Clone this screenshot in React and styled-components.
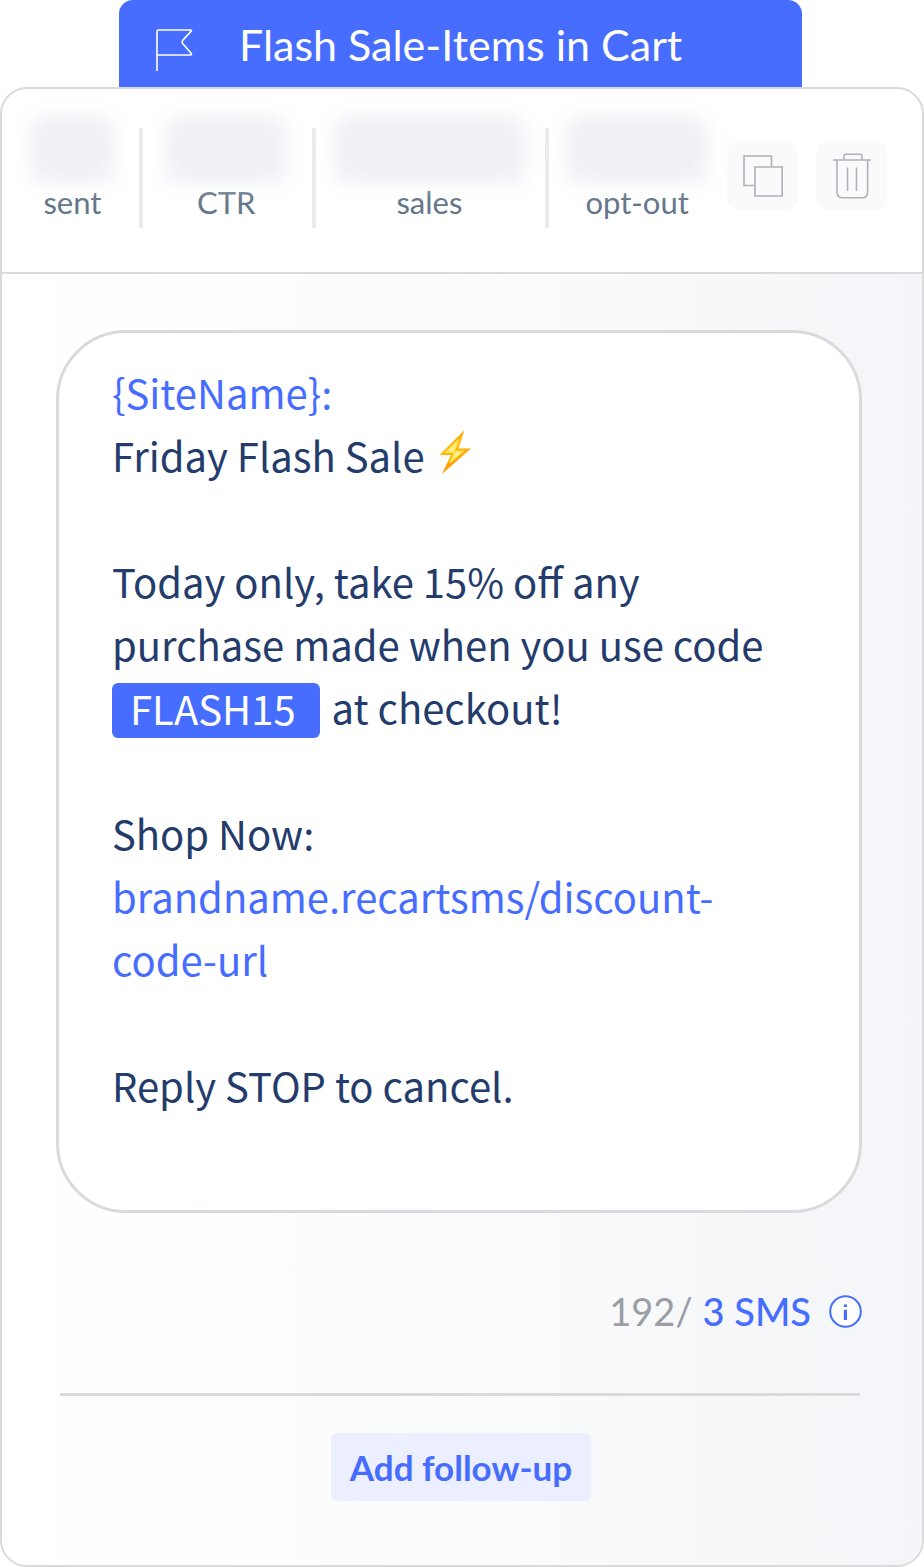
import styled, { createGlobalStyle } from "styled-components";

const GlobalStyle = createGlobalStyle`
  * {
    box-sizing: border-box;
  }

  body {
    margin: 0;
    background: #fff;
    font-family: Lato, "Open Sans", sans-serif;
  }
`;

const Page = styled.main`
  min-width: 720px;
`;

const Tab = styled.header`
  display: flex;
  align-items: flex-end;
  gap: 45px;
  height: 87px;
  margin: 0 122px 0 119px;
  padding: 0 34px 15px;
  background: #476dff;
  color: #fff;
  border-radius: 14px 14px 0 0;
`;

const Title = styled.h1`
  margin: 0;
  font-size: 43px;
  line-height: 54px;
  font-weight: 400;
  white-space: nowrap;
`;

const Card = styled.section`
  border: 2px solid #d9dadb;
  border-radius: 27px;
  overflow: hidden;
`;

const CardHeader = styled.div`
  display: flex;
  align-items: flex-start;
  padding: 28px 35px 44px 0;
  border-bottom: 2px solid #d9dadb;
`;

const Stat = styled.div`
  display: flex;
  flex-direction: column;
  align-items: center;
  flex: ${({ $grow }) => $grow} 1 0;
  padding-right: 2px;

  &:first-child {
    padding: 0 0 0 4px;
  }
`;

const HiddenValue = styled.div`
  width: ${({ $width }) => $width};
  height: 66px;
  background: #eff0f5;
  border-radius: 12px;
  filter: blur(10px);
`;

const StatLabel = styled.span`
  font-size: 31px;
  line-height: 38px;
  color: #64768a;
`;

const Divider = styled.div`
  width: 4px;
  height: 100px;
  margin-top: 11px;
  background: #ebebeb;
`;

const Actions = styled.div`
  display: flex;
  gap: 18px;
  margin-top: 24px;
`;

const IconButton = styled.button`
  display: flex;
  align-items: center;
  justify-content: center;
  width: 71px;
  height: 69px;
  padding: 0;
  border: none;
  border-radius: 12px;
  background: #f9fafc;
  color: #aeb1b8;
  cursor: pointer;
`;

const CardBody = styled.div`
  padding: 56px 60px 64px 54px;
  background: linear-gradient(90deg, #fff 0%, #fafbfc 55%, #f4f5f8 100%);
`;

const Message = styled.div`
  padding: 28px 53px 93px;
  border: 3px solid #d9dadb;
  border-radius: 70px;
  background: #fff;
  color: #243c6c;
  font-family: "Noto Sans CJK SC", "Open Sans", sans-serif;
  font-size: 40px;
  line-height: 63px;
`;

const Paragraph = styled.p`
  margin: 0 0 63px;

  &:last-child {
    margin-bottom: 0;
  }
`;

const Variable = styled.span`
  color: #476dff;
`;

const ShopLink = styled.a`
  color: #476dff;
  text-decoration: none;
`;

const Code = styled.span`
  display: inline-block;
  height: 55px;
  margin: 7px 3px 0 0;
  padding: 0 24px 0 18px;
  border-radius: 6px;
  background: #476dff;
  color: #fff;
  line-height: 50px;
  vertical-align: top;
`;

const Bolt = styled.svg`
  margin-left: 4px;
  vertical-align: -3px;
`;

const Counter = styled.div`
  display: flex;
  align-items: center;
  justify-content: flex-end;
  margin-top: 74px;
  font-size: 38px;
  line-height: 48px;
`;

const Characters = styled.span`
  color: #9c9ea6;
`;

const Segments = styled.span`
  margin: 0 18px 0 10px;
  color: #476dff;
  font-weight: 500;
`;

const InfoButton = styled.button`
  display: flex;
  padding: 0;
  border: none;
  background: none;
  color: #476dff;
  cursor: pointer;
`;

const Separator = styled.hr`
  height: 3px;
  margin: 58px 2px 37px 4px;
  border: none;
  background: #d9dadb;
`;

const Footer = styled.div`
  display: flex;
  justify-content: center;
  padding-left: 4px;
`;

const FollowUpButton = styled.button`
  height: 68px;
  padding: 0 19px;
  border: none;
  border-radius: 6px;
  background: #ecefff;
  color: #476dff;
  font-family: inherit;
  font-size: 35px;
  font-weight: 700;
  cursor: pointer;
`;

const stats = [
  { label: "sent", grow: 133, width: "62%" },
  { label: "CTR", grow: 167, width: "72%" },
  { label: "sales", grow: 228, width: "83%" },
  { label: "opt-out", grow: 176, width: "80%" },
];

function FlagIcon() {
  return (
    <svg width="41" height="44" viewBox="0 0 41 44" fill="none" stroke="currentColor" strokeWidth="1.6" aria-hidden="true">
      <path d="M4 43V3.5Q4 2 5.5 2H37.4Q39.2 2 38 3.4L29.6 12.5Q28.6 14 29.6 15.5L38 25Q39.2 27 37.4 27H4" />
    </svg>
  );
}

function CopyIcon() {
  return (
    <svg width="40" height="42" viewBox="0 0 40 42" fill="none" stroke="currentColor" strokeWidth="1.6" aria-hidden="true">
      <path d="M11.5 30.5H1V1H28.5V12" />
      <path d="M12 12H39.2V41H12Z" />
    </svg>
  );
}

function TrashIcon() {
  return (
    <svg width="38" height="46" viewBox="0 0 38 46" fill="none" stroke="currentColor" strokeWidth="1.6" aria-hidden="true">
      <path d="M0 7H38M11 7V3Q11 1.2 12.8 1.2H27.2Q29 1.2 29 3V7" />
      <path d="M4 7V39Q4 44.8 9.8 44.8H28.8Q34.6 44.8 34.6 39V7M14.5 14.5V38M23.5 14.5V38" />
    </svg>
  );
}

function InfoIcon() {
  return (
    <svg width="33" height="33" viewBox="0 0 33 33" aria-hidden="true">
      <circle cx="16.5" cy="16.5" r="15.3" fill="#fff" stroke="currentColor" strokeWidth="2" />
      <path d="M14.8 9.5H18V12H14.8ZM14.8 14.7H18V25H14.8Z" fill="currentColor" />
    </svg>
  );
}

function BoltIcon() {
  return (
    <Bolt width="34" height="46" viewBox="0 0 34 46" role="img" aria-label="lightning">
      <defs>
        <linearGradient id="bolt" x1="0" y1="0" x2="0.4" y2="1">
          <stop offset="0" stopColor="#ff9c00" />
          <stop offset="0.5" stopColor="#ffb80c" />
          <stop offset="1" stopColor="#ff9400" />
        </linearGradient>
      </defs>
      <path d="M26.5 1L1.5 26H13L4 45L33 19.5H20.5Z" fill="url(#bolt)" />
      <path d="M21 10.5L8 23.2H17L12 33.5L25 22.3H16Z" fill="#fff3a0" stroke="#ffe14a" strokeWidth="1.6" />
    </Bolt>
  );
}

function StatGroup({ stat, divided }) {
  return (
    <>
      {divided && <Divider />}
      <Stat $grow={stat.grow}>
        <HiddenValue $width={stat.width} />
        <StatLabel>{stat.label}</StatLabel>
      </Stat>
    </>
  );
}

export default function App() {
  return (
    <Page>
      <GlobalStyle />
      <Tab>
        <FlagIcon />
        <Title>Flash Sale-Items in Cart</Title>
      </Tab>

      <Card>
        <CardHeader>
          {stats.map((stat, index) => (
            <StatGroup key={stat.label} stat={stat} divided={index > 0} />
          ))}
          <Actions>
            <IconButton type="button" aria-label="Duplicate">
              <CopyIcon />
            </IconButton>
            <IconButton type="button" aria-label="Delete">
              <TrashIcon />
            </IconButton>
          </Actions>
        </CardHeader>

        <CardBody>
          <Message>
            <Paragraph>
              <Variable>{"{SiteName}:"}</Variable>
              <br />
              Friday Flash Sale <BoltIcon />
            </Paragraph>
            <Paragraph>
              Today only, take 15% off any purchase made when you use code{" "}
              <Code>FLASH15</Code> at checkout!
            </Paragraph>
            <Paragraph>
              Shop Now:
              <br />
              <ShopLink href="#shop">brandname.recartsms/discount-code-url</ShopLink>
            </Paragraph>
            <Paragraph>Reply STOP to cancel.</Paragraph>
          </Message>

          <Counter>
            <Characters>192/</Characters>
            <Segments>3 SMS</Segments>
            <InfoButton type="button" aria-label="About SMS length">
              <InfoIcon />
            </InfoButton>
          </Counter>

          <Separator />

          <Footer>
            <FollowUpButton type="button">Add follow-up</FollowUpButton>
          </Footer>
        </CardBody>
      </Card>
    </Page>
  );
}
